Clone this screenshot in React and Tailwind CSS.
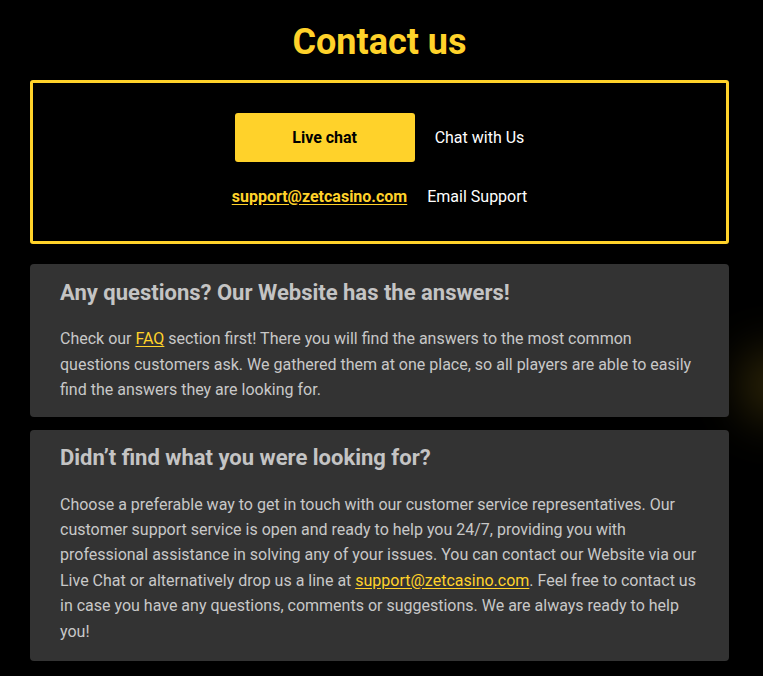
export default function App() {
  return (
    <div
      className="relative min-h-[676px] w-full overflow-hidden bg-black"
      style={{ fontFamily: 'Roboto, "Liberation Sans", sans-serif' }}
    >
      {/* faint glow on the right edge */}
      <div className="pointer-events-none absolute right-[-40px] top-[350px] h-[70px] w-[60px] rounded-full bg-[#ffd22a]/20 blur-xl"></div>

      <div className="relative pl-[30px] pr-[34px] pt-[21px] pb-4">
        <h1 className="text-center text-[36px] font-bold leading-[42px] text-[#ffd22a]">Contact us</h1>

        {/* Contact box */}
        <div className="mt-[17px] rounded-[3px] border-[3px] border-[#ffd22a] px-6 pt-[30px] pb-[24px]">
          <div className="flex items-center justify-center gap-5">
            <button className="h-[49px] w-[180px] rounded-[3px] bg-[#ffd22a] text-[16px] font-bold text-black">
              Live chat
            </button>
            <span className="text-[16px] text-white">Chat with Us</span>
          </div>
          <div className="mt-[15px] flex h-[40px] items-center justify-center gap-5">
            <a href="#" className="text-[16px] font-bold text-[#ffd22a] underline underline-offset-2">
              support@zetcasino.com
            </a>
            <span className="text-[16px] text-white">Email Support</span>
          </div>
        </div>

        {/* FAQ card */}
        <div className="mt-[20px] rounded-[4px] bg-[#333333] pl-[30px] pr-[32px] pt-[16px] pb-[14px]">
          <h2 className="text-[22px] font-bold leading-[26px] text-[#c4c4c4]">
            Any questions? Our Website has the answers!
          </h2>
          <p className="mt-[20px] text-[16px] leading-[25.5px] text-[#c8c8c8]">
            Check our <a href="#" className="text-[#ffd22a] underline underline-offset-2">FAQ</a> section first! There you will find the answers to the most common questions customers ask. We gathered them at one place, so all players are able to easily find the answers they are looking for.
          </p>
        </div>

        {/* Support card */}
        <div className="mt-[13px] rounded-[4px] bg-[#333333] pl-[30px] pr-[32px] pt-[15px] pb-[17px]">
          <h2 className="text-[22px] font-bold leading-[26px] text-[#c4c4c4]">
            Didn’t find what you were looking for?
          </h2>
          <p className="mt-[21px] text-[16px] leading-[25.4px] text-[#c8c8c8]">
            Choose a preferable way to get in touch with our customer service representatives. Our customer support service is open and ready to help you 24/7, providing you with professional assistance in solving any of your issues. You can contact our Website via our Live Chat or alternatively drop us a line at{' '}
            <a href="#" className="text-[#ffd22a] underline underline-offset-2">support@zetcasino.com</a>. Feel free to contact us in case you have any questions, comments or suggestions. We are always ready to help you!
          </p>
        </div>
      </div>
    </div>
  );
}
